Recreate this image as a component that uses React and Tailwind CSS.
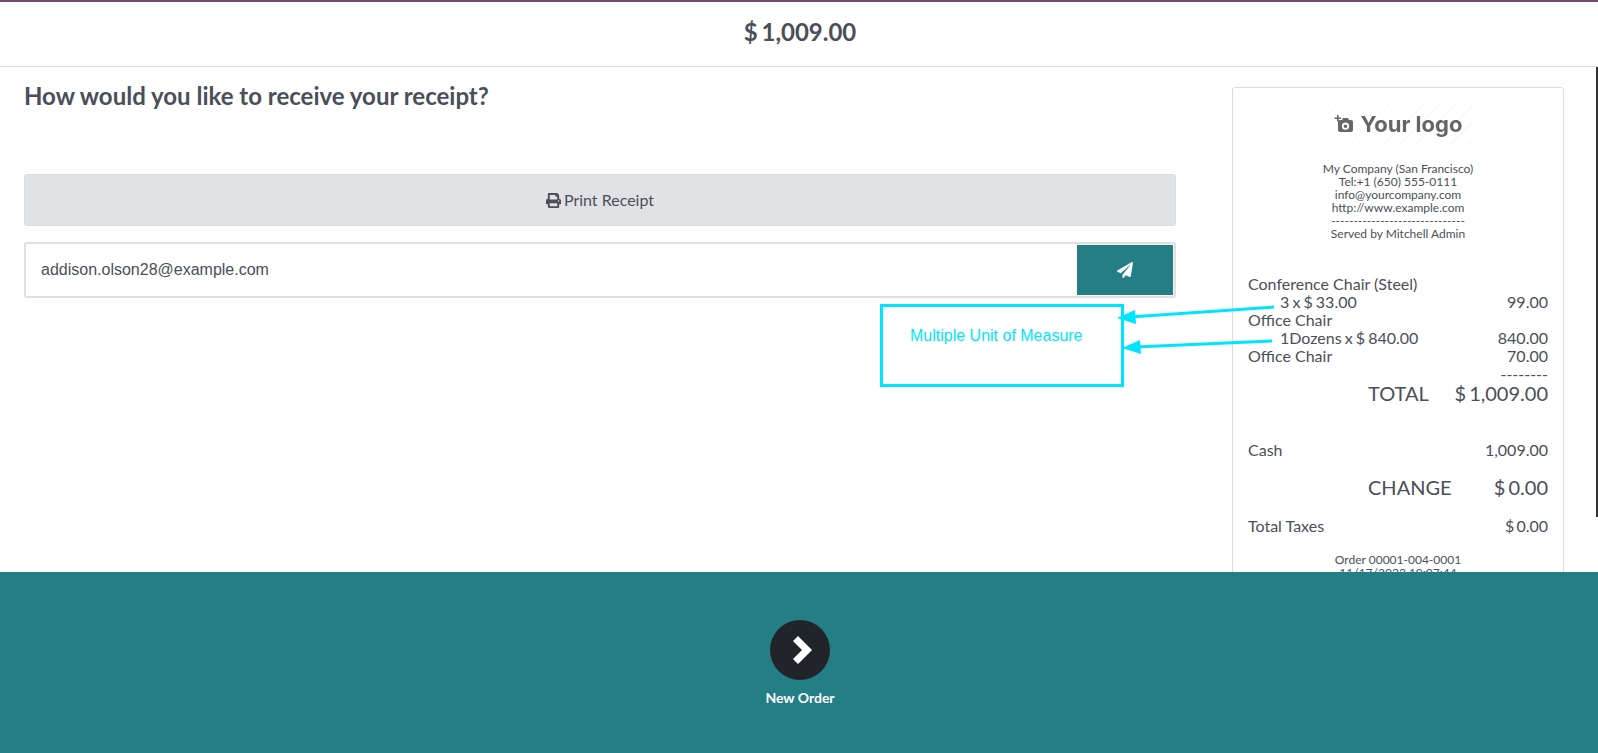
import React from 'react';
import { FaPrint, FaPaperPlane } from 'react-icons/fa';

function Row({ left, right, className = '' }) {
  return (
    <div className={`flex justify-between ${className}`}>
      <span>{left}</span>
      <span>{right}</span>
    </div>
  );
}

function Logo() {
  return (
    <div className="mx-auto mt-4 flex h-10 w-[150px] items-center justify-center gap-[7px] bg-[repeating-linear-gradient(135deg,#ffffff_0px,#ffffff_10px,#fafafa_10px,#fafafa_12px)] text-[#666666]">
      <svg viewBox="0 0 20 20" className="h-5 w-5 shrink-0" fill="currentColor">
        <path d="M3 1h1.6v2.4H7V5H4.6v2.4H3V5H.6V3.4H3z" />
        <path fillRule="evenodd" d="M6 6h2l1-2h5l1 2h2a2 2 0 0 1 2 2v8a2 2 0 0 1-2 2H6a2 2 0 0 1-2-2V8a2 2 0 0 1 2-2zm5.5 2.6a3.6 3.6 0 1 0 0 7.2 3.6 3.6 0 0 0 0-7.2zm0 1.8a1.8 1.8 0 1 1 0 3.6 1.8 1.8 0 0 1 0-3.6z" />
      </svg>
      <span className="font-['Inter',sans-serif] text-[22px] leading-none font-bold blur-[0.3px]">Your logo</span>
    </div>
  );
}

function Receipt() {
  return (
    <div className="mt-5 ml-[56px] h-[560px] w-[332px] shrink-0 rounded-[3px] border border-[#dcdcdc] px-[15px] text-[#4a4f59]">
      <Logo />
      <div className="mt-[18px] text-center text-[12px] leading-[13px]">
        <div>My Company (San Francisco)</div>
        <div>Tel:+1 (650) 555-0111</div>
        <div>info@yourcompany.com</div>
        <div>http://www.example.com</div>
        <div>------------------------------</div>
        <div>Served by Mitchell Admin</div>
      </div>

      {/* Order lines */}
      <div className="mt-[35px] text-[16px] leading-[18px]">
        <div>Conference Chair (Steel)</div>
        <Row left={<span className="pl-8 [word-spacing:-1px]">3 x $ 33.00</span>} right="99.00" />
        <div>Office Chair</div>
        <Row left={<span className="pl-8 [word-spacing:-1px]">1Dozens x $ 840.00</span>} right="840.00" />
        <Row left="Office Chair" right="70.00" />
        <div className="text-right">--------</div>
      </div>
      <div className="-mt-[1px] flex justify-between pl-[120px] text-[20px] leading-[22px]">
        <span>TOTAL</span>
        <span className="[word-spacing:-2px]">$ 1,009.00</span>
      </div>

      <Row left="Cash" right="1,009.00" className="mt-[37px] text-[16px] leading-[18px]" />
      <div className="mt-[17px] flex justify-between pl-[120px] text-[20px] leading-[22px]">
        <span>CHANGE</span>
        <span className="[word-spacing:-2px]">$ 0.00</span>
      </div>
      <Row left="Total Taxes" right={<span className="[word-spacing:-2px]">$ 0.00</span>} className="mt-[19px] text-[16px] leading-[18px]" />

      <div className="mt-[18px] text-center text-[12px] leading-[13px]">
        <div>Order 00001-004-0001</div>
        <div>11/17/2023 10:07:44</div>
      </div>
    </div>
  );
}

export default function App() {
  return (
    <div className="relative flex h-[753px] flex-col overflow-hidden bg-white font-['Lato',sans-serif] text-[#4a4f59]">
      <div className="h-[2px] shrink-0 bg-[#714b67]" />

      {/* Amount */}
      <div className="flex h-[65px] shrink-0 items-center justify-center border-b border-[#d8dadd] pb-1 pl-[2px] text-[24px] font-bold [word-spacing:-2px]">
        $ 1,009.00
      </div>

      <div className="flex min-h-0 flex-1 overflow-hidden">
        <div className="ml-6 w-[1152px] shrink-0">
          <h1 className="mt-[14px] text-[24px] leading-[30px] font-bold">How would you like to receive your receipt?</h1>

          <button className="mt-[63px] flex h-[52px] w-full items-center justify-center gap-[3px] rounded-[3px] border border-[#d8dadd] bg-[#e0e2e6] text-[16px]">
            <FaPrint className="h-[15px] w-[15px]" />
            Print Receipt
          </button>

          <div className="mt-4 flex h-14 items-center justify-between rounded-[3px] border-2 border-[#e0e0e0] pr-[1px] pl-[15px]">
            <input
              readOnly
              value="addison.olson28@example.com"
              className="min-w-0 flex-1 font-['Liberation_Sans',sans-serif] text-[16px] text-[#4a4f59] outline-none"
            />
            <button className="flex h-[50px] w-24 items-center justify-center bg-[#237e85] text-white">
              <FaPaperPlane className="h-4 w-4" />
            </button>
          </div>
        </div>

        <Receipt />

        <div className="ml-8 h-[450px] w-[2px] shrink-0 bg-[#333333]" />
      </div>

      {/* Footer */}
      <div className="flex h-[181px] shrink-0 flex-col items-center bg-[#237e85] pt-[48px] pl-[2px] text-white">
        <div className="flex h-[60px] w-[60px] items-center justify-center rounded-full bg-[#212529]">
          <svg viewBox="0 0 19 28" width="19" height="28" fill="currentColor" className="ml-[5px]">
            <polygon points="0,5 5,0 19,14 5,28 0,23 9,14" />
          </svg>
        </div>
        <div className="mt-2 text-[14px] leading-5 font-bold">New Order</div>
      </div>

      {/* Annotation drawn over the screenshot */}
      <div className="absolute top-[304px] left-[880px] h-[83px] w-[244px] border-[3px] border-[#00e5ff] pt-[19px] pl-[27px] font-['Liberation_Sans',sans-serif] text-[16px] leading-[20px] text-[#00e5ff]">
        Multiple Unit of Measure
      </div>
      <svg className="pointer-events-none absolute top-0 left-0" width="1598" height="753" fill="#00e5ff" stroke="none">
        <line x1="1274" y1="307" x2="1130" y2="317" stroke="#00e5ff" strokeWidth="3" />
        <polygon points="1117,318 1135,310 1136,324" />
        <line x1="1272" y1="341" x2="1135" y2="347" stroke="#00e5ff" strokeWidth="3" />
        <polygon points="1122,348 1140,340 1141,354" />
      </svg>
    </div>
  );
}
